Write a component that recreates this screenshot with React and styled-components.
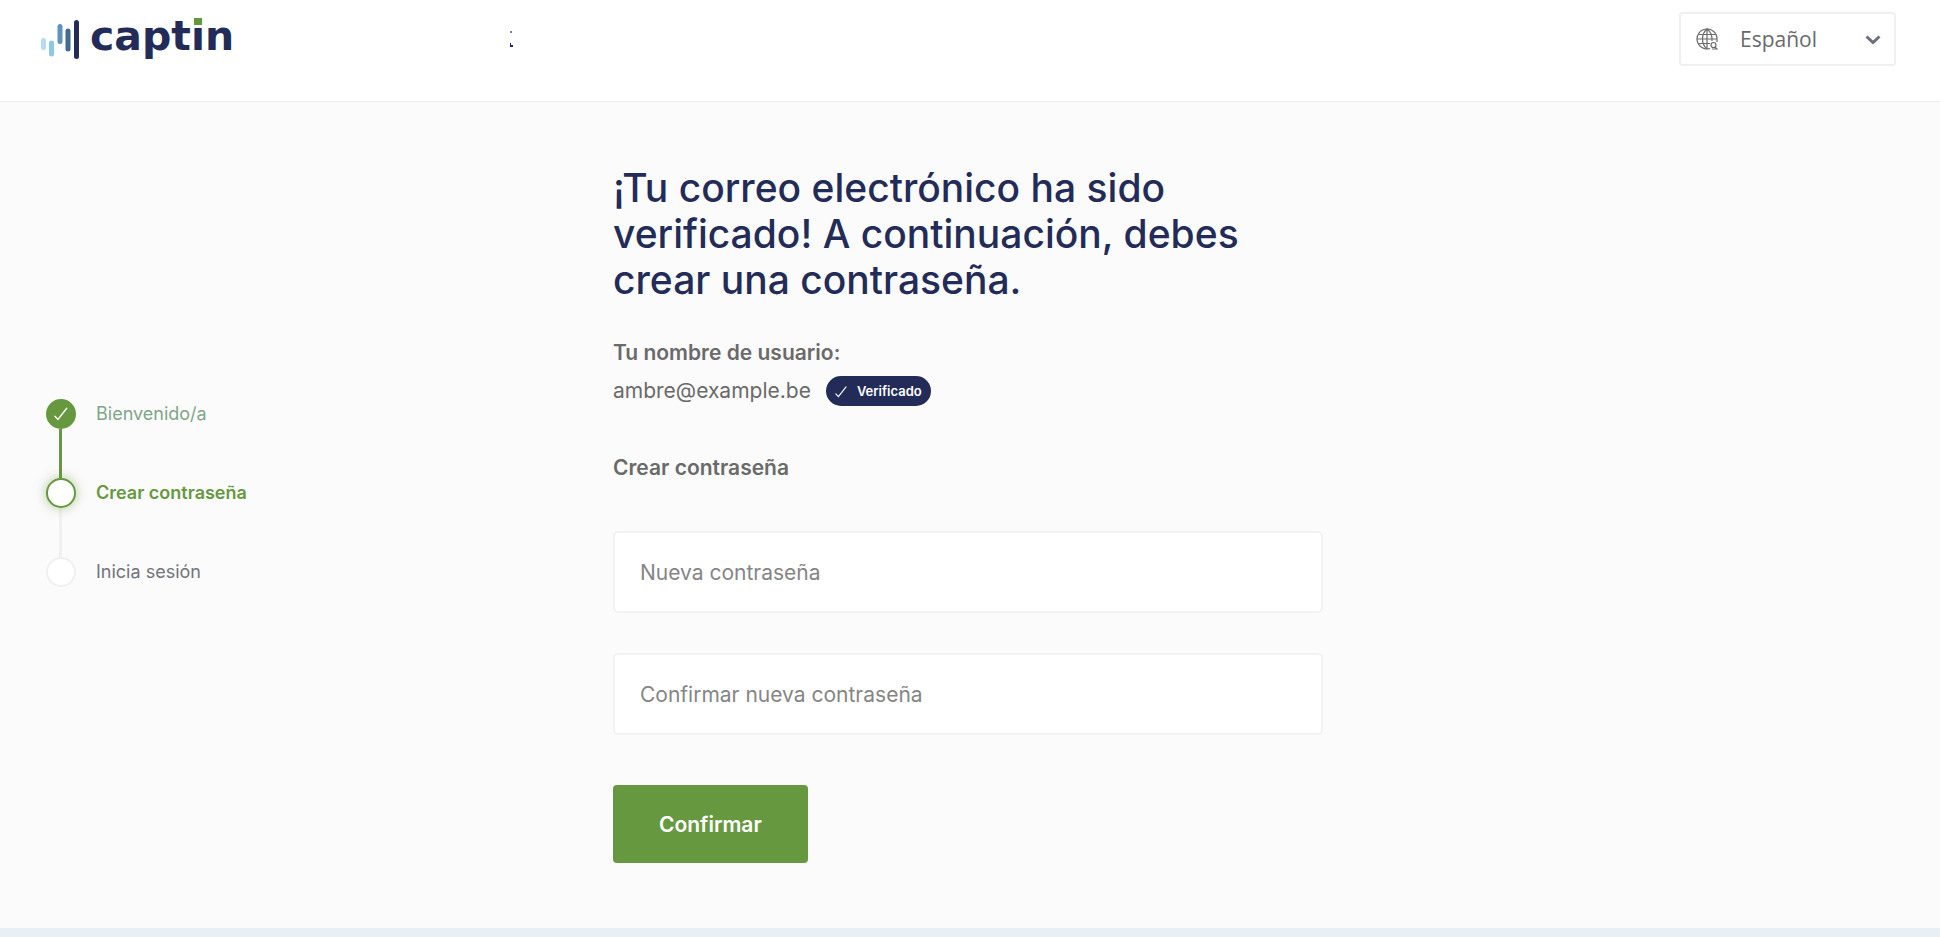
import React from "react";
import styled, { createGlobalStyle } from "styled-components";

const GlobalStyle = createGlobalStyle`
  * {
    box-sizing: border-box;
  }
  body {
    margin: 0;
    background: #e8eff5;
    color: #6a6a6a;
    font-family: Inter, "Open Sans", sans-serif;
    font-size: 21px;
  }
`;

const Page = styled.div`
  display: flex;
  flex-direction: column;
  min-height: 100vh;
`;

const Header = styled.header`
  display: flex;
  align-items: flex-start;
  padding: 12px 44px 35px 40px;
  background: #fff;
  border-bottom: 1px solid #ececec;
`;

const Logo = styled.a`
  display: flex;
  align-items: flex-start;
  gap: 10px;
  color: #232c58;
  text-decoration: none;
`;

const Wordmark = styled.span`
  font-family: "DejaVu Sans", sans-serif;
  font-size: 41px;
  font-weight: 700;
  line-height: 48px;
`;

// the dot of the "i" is a green square
const DottedI = styled.span`
  position: relative;
  display: inline-block;

  &::after {
    content: "";
    position: absolute;
    top: 6px;
    left: 3px;
    width: 8px;
    height: 7px;
    background: #66993f;
  }
`;

const Marks = styled.svg`
  margin: 18px auto 0 276px;
`;

const Language = styled.label`
  position: relative;
  width: 217px;

  svg {
    position: absolute;
    top: 16px;
    pointer-events: none;
  }
  .globe {
    left: 17px;
  }
  .arrow {
    right: 14px;
  }
`;

const LanguageSelect = styled.select`
  width: 100%;
  height: 54px;
  padding: 0 44px 0 59px;
  border: 2px solid #f0f0f0;
  border-radius: 4px;
  background: #fff;
  color: #6a6a6a;
  font-family: "Open Sans", sans-serif;
  font-size: 21px;
  appearance: none;
`;

const Main = styled.main`
  display: grid;
  grid-template-columns: 1fr minmax(0, 710px) 1fr;
  flex: 1;
  padding: 63px 48px 64px 44px;
  margin-bottom: 9px;
  background: #fbfbfb;
`;

const Steps = styled.ol`
  align-self: center;
  margin: 0;
  padding: 0 0 44px 2px;
  list-style: none;
`;

const Step = styled.li`
  display: flex;
  align-items: center;
  gap: 20px;
  color: ${p => (p.$state === "next" ? "#73737b" : p.$state === "done" ? "#7fa68a" : "#66993f")};
  font-size: 18px;
  font-weight: ${p => (p.$state === "current" ? 600 : 400)};
  line-height: 30px;
`;

const Dot = styled.span`
  display: flex;
  align-items: center;
  justify-content: center;
  width: 30px;
  height: 30px;
  border: 2px solid ${p => (p.$state === "next" ? "#f0f0f0" : "#66993f")};
  border-radius: 50%;
  background: ${p => (p.$state === "done" ? "#66993f" : "#fff")};
  box-shadow: ${p => (p.$state === "current" ? "0 0 12px rgba(102, 153, 63, 0.5)" : "none")};
`;

const Connector = styled.li`
  width: 3px;
  height: 49px;
  margin-left: 13px;
  background: ${p => (p.$done ? "#66993f" : "#f0f0f0")};
`;

const Title = styled.h1`
  margin: 0 0 34px;
  color: #232c58;
  font-size: 39px;
  font-weight: 500;
  line-height: 46px;
`;

const Label = styled.h2`
  margin: 0;
  font-size: 21px;
  font-weight: 600;
  line-height: 32px;
`;

const User = styled.div`
  display: flex;
  align-items: center;
  gap: 15px;
  margin: 7px 0 46px;
  line-height: 30px;
`;

const Badge = styled.span`
  display: flex;
  align-items: center;
  gap: 9px;
  height: 30px;
  padding: 0 9px;
  border-radius: 15px;
  background: #232c58;
  color: #fff;
  font-size: 13px;
  font-weight: 600;
`;

const Form = styled.form`
  display: flex;
  flex-direction: column;
  align-items: flex-start;
  gap: 40px;
  margin-top: 47px;
`;

const Input = styled.input`
  width: 100%;
  height: 82px;
  padding: 0 25px;
  border: 2px solid #f2f2f2;
  border-radius: 5px;
  background: #fff;
  color: #6a6a6a;
  font-family: inherit;
  font-size: 21px;

  &::placeholder {
    color: #858585;
    opacity: 1;
  }
`;

const Submit = styled.button`
  height: 78px;
  margin-top: 10px;
  padding: 0 46px;
  border: 0;
  border-radius: 4px;
  background: #66993f;
  color: #fff;
  font-family: inherit;
  font-size: 21px;
  font-weight: 600;
`;

const steps = [
  { label: "Bienvenido/a", state: "done" },
  { label: "Crear contraseña", state: "current" },
  { label: "Inicia sesión", state: "next" },
];

function Check({ size }) {
  return (
    <svg width={size} height={size} viewBox="0 0 16 16" fill="none" stroke="#fff" strokeWidth="1.4" strokeLinecap="round" aria-hidden="true">
      <path d="M1 11 4.2 14.4 13.6 2.4" />
    </svg>
  );
}

function LogoBars() {
  return (
    <svg width="40" height="48" viewBox="0 0 40 48" strokeWidth="5" strokeLinecap="round" aria-hidden="true">
      <path d="M3.5 28.5v7" stroke="#b9dbf0" />
      <path d="M11.5 31v11" stroke="#8ec6e6" />
      <path d="M20 14.5v15" stroke="#5f92bf" />
      <path d="M28 19v18" stroke="#406a8f" />
      <path d="M36.5 10.5v34" stroke="#232c58" />
    </svg>
  );
}

export default function App() {
  return (
    <Page>
      <GlobalStyle />
      <Header>
        <Logo href="#">
          <LogoBars />
          <Wordmark>
            capt<DottedI>i</DottedI>n
          </Wordmark>
        </Logo>
        <Marks width="5" height="18" viewBox="0 0 5 18" aria-hidden="true">
          <path d="M0 1h2v2H0z" fill="#7b78bd" />
          <path d="M0 13h1v2h2v2H0z" fill="#23207e" />
        </Marks>
        <Language>
          <svg className="globe" width="22" height="22" viewBox="0 0 22 22" fill="none" stroke="#6a6a6a" strokeWidth="1.2" aria-hidden="true">
            <path d="M14 20.5A10 10 0 1 1 21 11v3" />
            <path d="M11 1C5 6 5 16 11 21M11 1c4 3 5.500 7 5 12M11 1v20M3 6.500h16M1 11h20M3 15.500h11" />
            <circle cx="17.5" cy="17" r="2.500" />
            <path d="m19 19 2 2h-5" />
          </svg>
          <LanguageSelect aria-label="Idioma" defaultValue="es">
            <option value="es">Español</option>
          </LanguageSelect>
          <svg className="arrow" width="18" height="22" viewBox="0 0 18 22" fill="none" stroke="#6b7080" strokeWidth="3" aria-hidden="true">
            <path d="m2.500 8.500 6.500 6 6.500-6" />
          </svg>
        </Language>
      </Header>
      <Main>
        <Steps>
          {steps.map((step, i) => (
            <React.Fragment key={step.label}>
              {i > 0 && <Connector $done={steps[i - 1].state === "done"} aria-hidden="true" />}
              <Step $state={step.state}>
                <Dot $state={step.state}>{step.state === "done" && <Check size={15} />}</Dot>
                {step.label}
              </Step>
            </React.Fragment>
          ))}
        </Steps>
        <section>
          <Title>¡Tu correo electrónico ha sido verificado! A continuación, debes crear una contraseña.</Title>
          <Label>Tu nombre de usuario:</Label>
          <User>
            ambre@example.be
            <Badge>
              <Check size={13} />
              Verificado
            </Badge>
          </User>
          <Label>Crear contraseña</Label>
          <Form onSubmit={e => e.preventDefault()}>
            <Input type="password" placeholder="Nueva contraseña" aria-label="Nueva contraseña" />
            <Input type="password" placeholder="Confirmar nueva contraseña" aria-label="Confirmar nueva contraseña" />
            <Submit type="submit">Confirmar</Submit>
          </Form>
        </section>
      </Main>
    </Page>
  );
}
